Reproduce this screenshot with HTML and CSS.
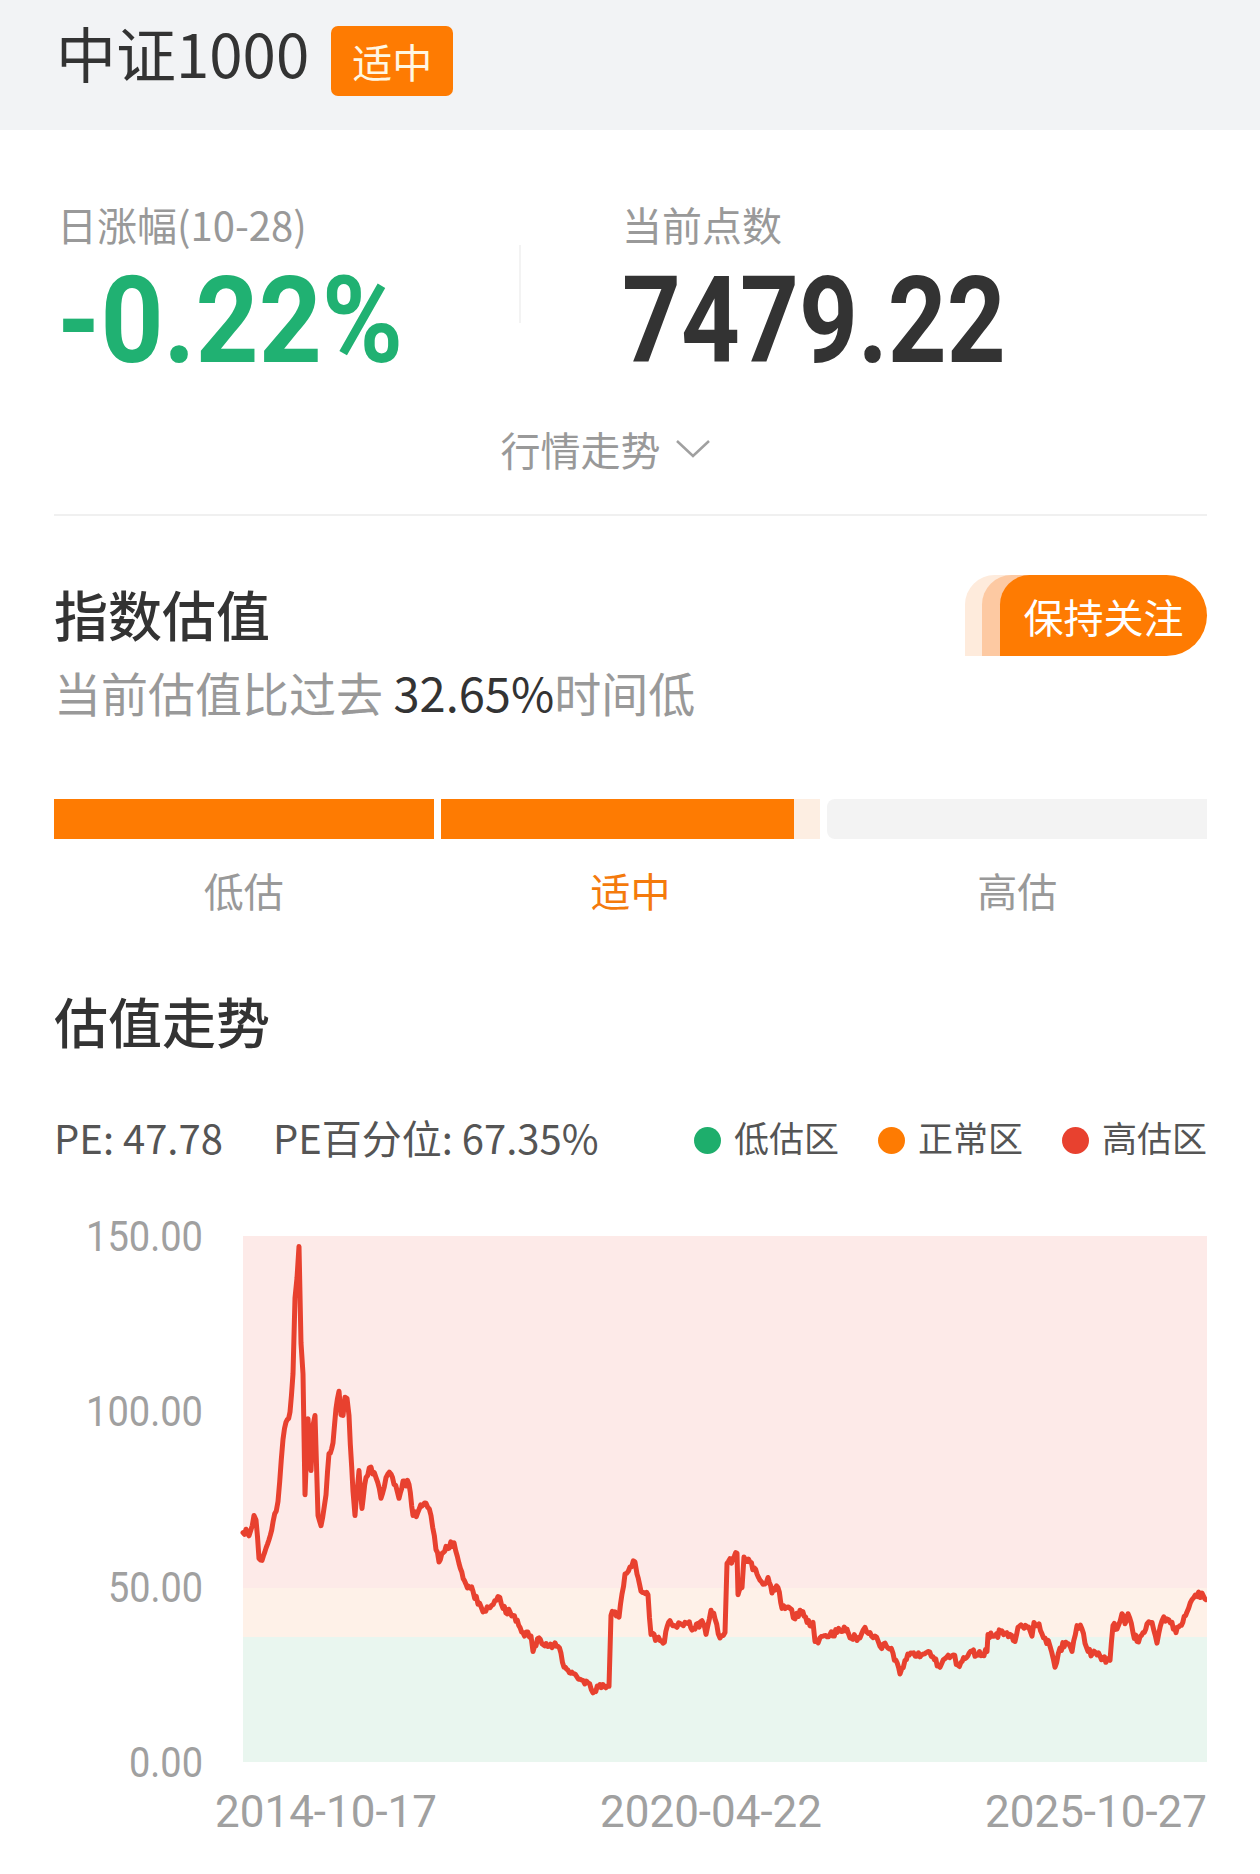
FILE: index.html
```html
<!DOCTYPE html>
<html lang="zh-CN">
<head>
    <meta charset="UTF-8">
    <meta name="viewport" content="width=device-width, initial-scale=1.0">
    <title>中证1000 - 指数估值</title>
    <link rel="stylesheet" href="styles.css">
</head>
<body>

    <!-- 顶部标题 -->
    <div class="top-bar">
        <h1>中证1000</h1>
        <span class="tag">适中</span>
    </div>

    <div class="content">
        <!-- 行情数据 -->
        <div class="stats">
            <div class="stat stat-left">
                <div class="stat-label">日涨幅(10-28)</div>
                <div class="stat-value"><span class="pct">-0.22%</span></div>
            </div>
            <div class="stat-divider"></div>
            <div class="stat stat-right">
                <div class="stat-label">当前点数</div>
                <div class="stat-value"><span class="points">7479.22</span></div>
            </div>
        </div>

        <div class="trend-toggle">
            <span>行情走势</span>
            <svg width="36" height="20" viewBox="0 0 36 20"><polyline points="2,2 18,17 34,2" fill="none" stroke="#a0a0a0" stroke-width="2.5"/></svg>
        </div>

        <div class="divider"></div>

        <!-- 指数估值 -->
        <div class="valuation-head">
            <h2>指数估值</h2>
            <button class="follow-btn">保持关注</button>
        </div>
        <p class="valuation-text">当前估值比过去 <strong>32.65%</strong>时间低</p>

        <div class="level-bar">
            <div class="seg seg-low"></div>
            <div class="seg seg-mid"><div class="seg-fill" style="width: 93%"></div></div>
            <div class="seg seg-high"></div>
        </div>
        <div class="level-labels">
            <span>低估</span>
            <span class="active">适中</span>
            <span>高估</span>
        </div>

        <!-- 估值走势 -->
        <h2 class="chart-title">估值走势</h2>
        <div class="pe-row">
            <span>PE: 47.78</span>
            <span class="pe-pct">PE百分位: 67.35%</span>
            <div class="legend">
                <span class="legend-item"><i class="dot dot-green"></i>低估区</span>
                <span class="legend-item"><i class="dot dot-orange"></i>正常区</span>
                <span class="legend-item"><i class="dot dot-red"></i>高估区</span>
            </div>
        </div>

        <svg class="chart" width="1153" height="660" viewBox="0 0 1153 660">
            <rect class="band-high" x="189" y="37" width="964" height="352"/>
            <rect class="band-mid" x="189" y="389" width="964" height="49"/>
            <rect class="band-low" x="189" y="438" width="964" height="125"/>
            <path id="pe-line" class="pe-line" d=""/>

            <text class="axis-y" x="149" y="37" dy="15" textLength="117" lengthAdjust="spacingAndGlyphs">150.00</text>
            <text class="axis-y" x="149" y="212" dy="15" textLength="117" lengthAdjust="spacingAndGlyphs">100.00</text>
            <text class="axis-y" x="149" y="388" dy="15" textLength="95" lengthAdjust="spacingAndGlyphs">50.00</text>
            <text class="axis-y" x="149" y="563" dy="15" textLength="74" lengthAdjust="spacingAndGlyphs">0.00</text>

            <text class="axis-x" x="161" y="628" textLength="222" lengthAdjust="spacingAndGlyphs">2014-10-17</text>
            <text class="axis-x mid" x="657" y="628" textLength="222" lengthAdjust="spacingAndGlyphs">2020-04-22</text>
            <text class="axis-x end" x="1153" y="628" textLength="222" lengthAdjust="spacingAndGlyphs">2025-10-27</text>
        </svg>
    </div>

    <!-- 画出PE曲线 -->
    <script>
        (function () {
            // [页面x坐标, PE]
            const points = [
                [243,65.4],[246,66.4],[249,64.5],[254,70.3],[256,69],[259,58.0],[262,57.5],[266,61],[269,63.4],
                [273,68.4],[278,74.3],[283,92.0],[286,96.9],[290,99.8],[293,110.7],[295,132.3],[297,138],[299,147.0],
                [301,119.5],[303,110.7],[305,76.2],[308,97.9],[311,83.1],[313,96],[315,98.8],[318,70.3],[321,67.4],
                [326,76.2],[329,88.0],[333,91.0],[336,100.8],[339,105.7],[341,99],[343,98.8],[345,104],[347,103.7],
                [349,98.8],[353,77.2],[355,70.3],[359,83.1],[362,72.3],[366,81.1],[371,84.1],[376,81.1],[381,75.2],
                [386,81.1],[391,82.1],[394,79.2],[399,75.2],[403,80.1],[409,79.2],[413,70.3],[418,71.3],[422,73],
                [426,73.8],[431,70.3],[436,60.5],[439,57.0],[446,61.5],[454,62.5],[459,56.6],[466,50.7],[473,48.7],
                [478,45],[483,42.8],[490,44],[498,47.2],[503,43.8],[513,41.8],[523,36.9],[531,35.9],[533,31.5],
                [539,35.4],[549,33.0],[558,33.0],[561,31],[564,27],[568,26.2],[572,25.6],[580,23.6],[588,22.6],
                [593,19.7],[600,22.1],[609,21.6],[611,41.8],[615,42.8],[619,41.3],[625,53.6],[630,55.6],[635,57.0],
                [637,53.6],[641,48.7],[648,47.7],[651,36.4],[657,35.4],[663,33.9],[670,40.3],[677,38.4],[685,39.8],
                [695,37.9],[702,40.3],[706,36.4],[711,43.3],[715,40.8],[720,35.4],[725,36.9],[727,56.6],[733,58.0],
                [737,59.5],[738,47.7],[742,49.7],[744,58.5],[750,57.0],[757,53.6],[763,50.7],[768,52.6],[772,48.2],
                [778,49.7],[782,43.8],[790,43.8],[795,40.8],[800,43.3],[807,39.8],[813,39.8],[815,34.4],[823,35.9],
                [830,36.4],[840,37.4],[847,37.9],[850,35.4],[860,35.4],[865,38.4],[870,36.9],[875,35.9],[880,33.0],
                [885,33.9],[888,32.5],[893,31.0],[900,25.1],[905,29.0],[912,31.0],[920,30.0],[928,31.5],[933,30.0],
                [940,27.0],[945,29.5],[953,30.5],[958,27.6],[965,29.5],[972,31.5],[978,30.5],[987,31.5],[988,36.4],
                [995,35.9],[1002,37.4],[1010,36.4],[1015,34.4],[1018,38.4],[1027,38.4],[1032,35.9],[1034,39.8],
                [1039,39.4],[1045,35.4],[1050,33.0],[1055,27.0],[1060,32.5],[1067,33.9],[1072,31.5],[1077,38.9],
                [1082,37.9],[1088,31.5],[1097,30.5],[1103,29.5],[1110,29.0],[1113,38.9],[1117,37.9],[1122,42.3],
                [1125,39.4],[1128,42.3],[1133,36.9],[1137,34.4],[1143,36.9],[1147,39.4],[1152,39.8],[1157,33.9],
                [1162,40.3],[1167,40.8],[1172,39.8],[1176,36.9],[1180,38.9],[1187,42.8],[1192,46.3],[1197,47.2],
                [1202,48.2],[1206,46.3]
            ];

            const plotLeft = 54, plotTop = 37, plotHeight = 526, maxPe = 150;
            let seed = 11;
            function rand() {
                seed = (seed * 16807) % 2147483647;
                return seed / 2147483647;
            }
            function toY(pe) {
                return plotTop + (maxPe - pe) / maxPe * plotHeight;
            }

            let d = '';
            for (let i = 0; i < points.length - 1; i++) {
                const [x1, p1] = points[i];
                const [x2, p2] = points[i + 1];
                const steps = Math.max(1, Math.round((x2 - x1) / 1.5));
                for (let s = 0; s < steps; s++) {
                    const t = s / steps;
                    let pe = p1 + (p2 - p1) * t;
                    if (s > 0) pe += (rand() - 0.5) * 2.0;
                    const x = x1 + (x2 - x1) * t - plotLeft;
                    d += (d ? 'L' : 'M') + x.toFixed(1) + ',' + toY(pe).toFixed(1);
                }
            }
            const last = points[points.length - 1];
            d += 'L' + (last[0] - plotLeft) + ',' + toY(last[1]).toFixed(1);
            document.getElementById('pe-line').setAttribute('d', d);
        })();
    </script>

</body>
</html>
```

FILE: styles.css
```css
body {
    margin: 0;
    background-color: #fff;
    font-family: "Noto Sans CJK SC", "Noto Sans", sans-serif;
    color: #333;
}

.top-bar {
    height: 130px;
    box-sizing: border-box;
    background-color: #f2f3f5;
    display: flex;
    align-items: flex-start;
    padding: 17px 0 0 56px;
}

.top-bar h1 {
    margin: 0;
    font-size: 60px;
    font-weight: 400;
    line-height: 70px;
    color: #333;
}

.tag {
    margin: 9px 0 0 22px;
    height: 70px;
    line-height: 70px;
    padding: 0 21px;
    background-color: #fe7b02;
    color: #fff7e2;
    font-size: 40px;
    border-radius: 7px;
}

.content {
    padding: 0 53px 0 54px;
}

/* 行情数据 */
.stats {
    display: flex;
    align-items: center;
    padding-top: 70px;
}

.stat-left {
    width: 462px;
    padding-left: 3px;
}

.stat-right {
    padding-left: 101px;
}

.stat-divider {
    width: 2px;
    height: 78px;
    background-color: #f3f3f3;
    align-self: flex-start;
    margin-top: 45px;
}

.stat-label {
    font-size: 40px;
    line-height: 48px;
    color: #999;
}

.stat-value {
    margin-top: 13px;
    height: 121px;
    font-family: Roboto, "Liberation Sans", sans-serif;
    font-weight: 700;
    font-size: 121px;
    line-height: 121px;
    white-space: nowrap;
}

.pct,
.points {
    display: inline-block;
    transform-origin: left center;
}

.pct {
    color: #20b172;
    transform: scaleX(0.91);
}

.points {
    color: #333;
    transform: scaleX(0.85);
}

.trend-toggle {
    display: flex;
    justify-content: center;
    align-items: center;
    gap: 14px;
    margin-top: 43px;
    padding-right: 50px;
    font-size: 40px;
    line-height: 48px;
    color: #999;
}

.divider {
    height: 2px;
    background-color: #f0f0f0;
    margin-top: 41px;
}

/* 指数估值 */
.valuation-head {
    display: flex;
    justify-content: space-between;
    align-items: flex-start;
    margin-top: 59px;
}

h2 {
    margin: 0;
    font-size: 54px;
    font-weight: 500;
    line-height: 64px;
    color: #333;
}

.valuation-head h2 {
    margin-top: 7px;
}

.follow-btn {
    width: 207px;
    height: 81px;
    border: none;
    border-radius: 30px 41px 41px 0;
    background-color: #fe7b02;
    color: #fff;
    font-family: inherit;
    font-size: 40px;
    padding: 0;
    box-shadow: -18px 0 0 #fdc9a2, -35px 0 0 #feebdc;
}

.valuation-text {
    margin: 8px 0 0;
    font-size: 47px;
    line-height: 56px;
    color: #999;
}

.valuation-text strong {
    font-weight: 400;
    color: #333;
}

.level-bar {
    display: grid;
    grid-template-columns: 1fr 1fr 1fr;
    gap: 7px;
    height: 40px;
    margin-top: 79px;
}

.seg-low {
    background-color: #fe7b02;
}

.seg-mid {
    background-color: #fdeee2;
}

.seg-fill {
    height: 100%;
    background-color: #fe7b02;
}

.seg-high {
    background-color: #f3f3f3;
    border-radius: 8px 0 0 8px;
}

.level-labels {
    display: grid;
    grid-template-columns: 1fr 1fr 1fr;
    gap: 7px;
    margin-top: 27px;
    text-align: center;
    font-size: 40px;
    line-height: 48px;
    color: #999;
}

.level-labels .active {
    color: #f47a0c;
}

/* 估值走势 */
.chart-title {
    margin-top: 75px;
}

.pe-row {
    display: flex;
    align-items: center;
    margin-top: 60px;
    font-size: 40px;
    line-height: 48px;
    color: #555;
}

.pe-pct {
    margin-left: 50px;
}

.legend {
    margin-left: auto;
    display: flex;
    gap: 39px;
    font-size: 35px;
}

.legend-item {
    display: flex;
    align-items: center;
    gap: 13px;
}

.dot {
    width: 27px;
    height: 27px;
    border-radius: 50%;
    margin-top: 6px;
}

.dot-green { background-color: #1eae6c; }
.dot-orange { background-color: #fe7b02; }
.dot-red { background-color: #e8412f; }

.chart {
    display: block;
    margin-top: 38px;
}

.band-high { fill: #fdeae8; }
.band-mid { fill: #fef1e8; }
.band-low { fill: #e9f6ef; }

.pe-line {
    fill: none;
    stroke: #e8412f;
    stroke-width: 5;
    stroke-linejoin: round;
    stroke-linecap: round;
}

.axis-y {
    font-family: Roboto, "Liberation Sans", sans-serif;
    font-size: 42px;
    fill: #a0a0a0;
    text-anchor: end;
}

.axis-x {
    font-family: Roboto, "Liberation Sans", sans-serif;
    font-size: 44px;
    fill: #a0a0a0;
}

.axis-x.mid { text-anchor: middle; }
.axis-x.end { text-anchor: end; }
```
